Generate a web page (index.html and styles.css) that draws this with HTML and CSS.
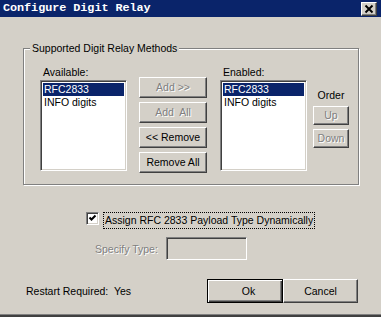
FILE: index.html
```html
<!DOCTYPE html>
<html>
<head>
<meta charset="utf-8">
<link rel="stylesheet" href="styles.css">
</head>
<body>
<div class="window">
  <div class="titlebar">
    <span class="title">Configure Digit Relay</span>
    <span class="close-btn">
      <svg width="14" height="12" viewBox="0 0 14 12"><path d="M3.5 2.5 L10.5 9.5 M10.5 2.5 L3.5 9.5" stroke="#000" stroke-width="1.9" fill="none"/></svg>
    </span>
  </div>

  <div class="group">
    <span class="legend">Supported Digit Relay Methods</span>
    <div class="col col-list">
      <div class="label">Available:</div>
      <div class="listbox">
        <div class="item selected">RFC2833</div>
        <div class="item">INFO digits</div>
      </div>
    </div>
    <div class="col col-buttons">
      <div class="btn disabled">Add &gt;&gt;</div>
      <div class="btn disabled">Add  All</div>
      <div class="btn">&lt;&lt; Remove</div>
      <div class="btn">Remove All</div>
    </div>
    <div class="col col-list col-enabled">
      <div class="label">Enabled:</div>
      <div class="listbox">
        <div class="item selected">RFC2833</div>
        <div class="item">INFO digits</div>
      </div>
    </div>
    <div class="col col-order">
      <div class="order-label">Order</div>
      <div class="btn small disabled">Up</div>
      <div class="btn small disabled">Down</div>
    </div>
  </div>

  <div class="check-row">
    <span class="checkbox">
      <svg width="9" height="9" viewBox="0 0 9 9"><polyline points="1.5,3.5 3.5,5.5 7.5,1.5" stroke="#000" stroke-width="2" fill="none"/></svg>
    </span>
    <span class="check-label">Assign RFC 2833 Payload Type Dynamically</span>
  </div>

  <div class="specify-row">
    <span class="specify-label">Specify Type:</span>
    <span class="textbox"></span>
  </div>

  <div class="footer">
    <span class="restart">Restart Required:  Yes</span>
    <div class="btn big default"><span class="ok-text">Ok</span></div>
    <div class="btn big">Cancel</div>
  </div>

  <div class="bottom-edge"></div>
</div>
</body>
</html>
```

FILE: styles.css
```css
* { box-sizing: border-box; }

html, body {
  margin: 0;
  padding: 0;
  background: #d4d0c8;
}

.window {
  width: 381px;
  height: 317px;
  background: #d4d0c8;
  font-family: "Liberation Sans", Arial, sans-serif;
  font-size: 10.5px;
  color: #000;
  display: flex;
  flex-direction: column;
  overflow: hidden;
}

.titlebar {
  height: 17px;
  background: #0a246a;
  display: flex;
  align-items: flex-start;
  justify-content: space-between;
  padding: 0 4px 0 3px;
  flex-shrink: 0;
}

.title {
  font-family: "Liberation Mono", "DejaVu Sans Mono", monospace;
  font-weight: bold;
  font-size: 11.8px;
  line-height: 17px;
  color: #fff;
  letter-spacing: -0.05px;
}

.close-btn {
  margin-top: 2px;
  width: 16px;
  height: 14px;
  background: #d4d0c8;
  border-top: 1px solid #fff;
  border-left: 1px solid #fff;
  border-right: 1px solid #404040;
  border-bottom: 1px solid #404040;
  box-shadow: inset -1px -1px 0 #808080;
  display: flex;
}

/* group box */
.group {
  position: relative;
  margin: 31px 0 0 23px;
  width: 336px;
  height: 137px;
  border: 1px solid #808080;
  box-shadow: inset 1px 1px 0 #fff, 1px 1px 0 #fff;
  padding: 17px 0 0 16px;
  display: flex;
  align-items: flex-start;
  flex-shrink: 0;
}

.legend {
  position: absolute;
  left: 6px;
  top: -7px;
  padding: 0 2px;
  background: #d4d0c8;
  line-height: 13px;
  white-space: pre;
}

.col {
  display: flex;
  flex-direction: column;
}

.col-list {
  width: 87px;
  margin-right: 12px;
}

.col-enabled {
  margin-right: 6px;
}

.label {
  height: 13px;
  line-height: 13px;
  padding-left: 3px;
  margin-bottom: 1px;
}

.listbox {
  height: 91px;
  background: #fff;
  border-top: 1px solid #808080;
  border-left: 1px solid #808080;
  border-right: 1px solid #fff;
  border-bottom: 1px solid #fff;
  box-shadow: inset 1px 1px 0 #404040, inset -1px -1px 0 #d4d0c8;
  padding: 2px 2px 0 2px;
}

.item {
  height: 13px;
  line-height: 13px;
  padding-left: 1px;
  white-space: pre;
}

.item.selected {
  background: #0a246a;
  color: #fff;
}

.col-buttons {
  width: 68px;
  margin-top: 11px;
  margin-right: 13px;
  gap: 4px;
}

.btn {
  height: 21px;
  background: #d4d0c8;
  border-top: 1px solid #fff;
  border-left: 1px solid #fff;
  border-right: 1px solid #404040;
  border-bottom: 1px solid #404040;
  box-shadow: inset -1px -1px 0 #808080;
  display: flex;
  align-items: center;
  justify-content: center;
  white-space: pre;
  line-height: 13px;
}

.btn.disabled {
  color: #808080;
  text-shadow: 1px 1px 0 #fff;
}

.col-order {
  width: 36px;
  margin-top: 23px;
}

.order-label {
  height: 13px;
  line-height: 13px;
  text-align: center;
  margin-bottom: 4px;
}

.btn.small {
  height: 19px;
  margin-bottom: 4px;
}

/* checkbox row */
.check-row {
  margin-top: 27px;
  padding-left: 86px;
  height: 17px;
  display: flex;
  align-items: flex-start;
  flex-shrink: 0;
}

.checkbox {
  width: 13px;
  height: 13px;
  background: #fff;
  border-top: 1px solid #808080;
  border-left: 1px solid #808080;
  border-right: 1px solid #fff;
  border-bottom: 1px solid #fff;
  box-shadow: inset 1px 1px 0 #404040, inset -1px -1px 0 #d4d0c8;
  display: flex;
  align-items: center;
  justify-content: center;
  margin-right: 4px;
}

.check-label {
  border: 1px dotted #000;
  padding: 0 1px;
  height: 17px;
  line-height: 15px;
  white-space: pre;
}

/* specify row */
.specify-row {
  margin-top: 8px;
  padding-left: 95px;
  height: 23px;
  display: flex;
  align-items: center;
  flex-shrink: 0;
}

.specify-label {
  color: #808080;
  text-shadow: 1px 1px 0 #fff;
  width: 71px;
  white-space: pre;
}

.textbox {
  width: 81px;
  height: 23px;
  background: #d4d0c8;
  border-top: 1px solid #808080;
  border-left: 1px solid #808080;
  border-right: 1px solid #fff;
  border-bottom: 1px solid #fff;
  box-shadow: inset 1px 1px 0 #404040, inset -1px -1px 0 #d4d0c8;
}

/* footer */
.footer {
  margin-top: 19px;
  padding: 0 23px 0 26px;
  height: 24px;
  display: flex;
  align-items: center;
  flex-shrink: 0;
}

.restart {
  flex: 1;
  white-space: pre;
}

.btn.big {
  height: 24px;
  width: 75px;
}

.btn.default {
  width: 76px;
  border: 1px solid #000;
  box-shadow: inset 1px 1px 0 #fff, inset -1px -1px 0 #404040, inset -2px -2px 0 #808080;
}

.ok-text {
  padding-left: 7px;
}

.bottom-edge {
  margin-top: 11px;
  height: 3px;
  border-top: 1px solid #808080;
  background: #404040;
  flex-shrink: 0;
}
```
